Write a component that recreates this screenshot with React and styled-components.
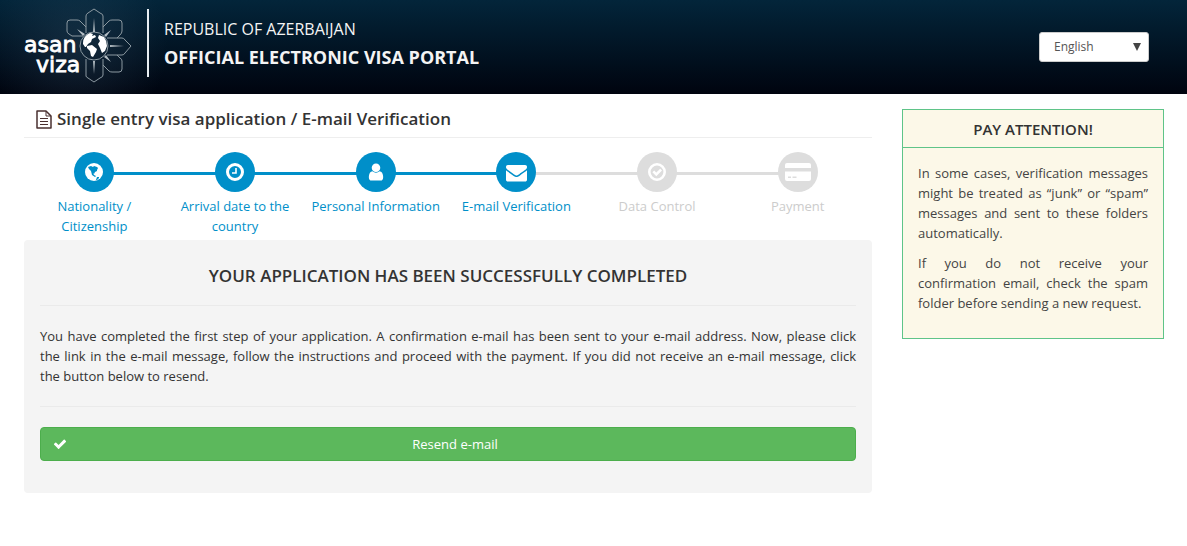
import { createGlobalStyle, styled } from "styled-components";

const GlobalStyle = createGlobalStyle`
  * {
    box-sizing: border-box;
  }
  body {
    margin: 0;
    background: #fff;
    color: #333;
    font-family: "Open Sans", "Noto Sans", sans-serif;
    font-size: 13px;
    line-height: 20px;
  }
  h1,
  h2,
  p,
  ol {
    margin: 0;
    padding: 0;
  }
`;

const Header = styled.header`
  display: flex;
  align-items: center;
  padding: 9px 38px 9px 24px;
  background:
    radial-gradient(circle at 78px 46px, rgba(60, 90, 115, 0.3), transparent 90px),
    linear-gradient(#03253a, #00040f);
`;

const LogoLink = styled.a`
  display: flex;
  margin-right: 14px;
`;

const PortalName = styled.div`
  flex: 1;
  align-self: flex-start;
  padding: 6px 0;
  padding-left: 15px;
  border-left: 2px solid #e8eef2;
  color: #f4f4f4;
  line-height: 28px;
`;

const PortalLine = styled.div`
  font-size: ${({ $strong }) => ($strong ? "18px" : "16px")};
  font-weight: ${({ $strong }) => ($strong ? 700 : 400)};
`;

const SelectBox = styled.div`
  position: relative;
  display: flex;

  svg {
    position: absolute;
    right: 8px;
    top: 11px;
    pointer-events: none;
  }
`;

const LanguageSelect = styled.select`
  appearance: none;
  width: 110px;
  height: 30px;
  padding: 0 14px;
  border: 1px solid #ccc;
  border-radius: 3px;
  background: #fff;
  color: #555;
  font: inherit;
  font-size: 12px;
`;

const Page = styled.div`
  display: flex;
  align-items: flex-start;
  gap: 30px;
  padding: 15px 23px 0 24px;
`;

const Main = styled.main`
  flex: 1;
  min-width: 0;
`;

const PageTitle = styled.h1`
  display: flex;
  align-items: center;
  gap: 5px;
  padding: 0 12px 8px;
  border-bottom: 1px solid #eee;
  font-size: 17px;
  font-weight: 600;
  line-height: 20px;
`;

const Steps = styled.ol`
  display: flex;
  padding: 14px 4px 4px 0;
  list-style: none;
`;

const Step = styled.li`
  position: relative;
  flex: 1;
  display: flex;
  flex-direction: column;
  align-items: center;
  gap: 4px;
  padding: 0 4px;
  color: ${({ $active }) => ($active ? "#008fc9" : "#ccc")};
  text-align: center;

  &:not(:first-child)::before {
    content: "";
    position: absolute;
    top: 20px;
    left: -50%;
    width: 100%;
    height: 3px;
    background: ${({ $active }) => ($active ? "#008fc9" : "#ddd")};
  }
`;

const StepCircle = styled.span`
  position: relative;
  z-index: 1;
  display: flex;
  align-items: center;
  justify-content: center;
  width: 40px;
  height: 40px;
  border-radius: 50%;
  background: ${({ $active }) => ($active ? "#008fc9" : "#ddd")};
  color: #fff;
`;

const Panel = styled.section`
  padding: 16px 16px 32px;
  border-radius: 4px;
  background: #f4f4f4;
`;

const PanelTitle = styled.h2`
  padding: 10px 0 19px;
  border-bottom: 1px solid #eaeaea;
  font-size: 17px;
  font-weight: 600;
  line-height: 20px;
  text-align: center;
`;

const PanelText = styled.p`
  padding: 20px 0;
  border-bottom: 1px solid #eaeaea;
  text-align: justify;
`;

const ResendButton = styled.button`
  display: flex;
  align-items: center;
  width: 100%;
  height: 34px;
  margin-top: 20px;
  padding: 0 12px;
  border: 1px solid #4cae4c;
  border-radius: 4px;
  background: #5cb85c;
  color: #fff;
  font: inherit;

  span {
    flex: 1;
  }
`;

const Notice = styled.aside`
  width: 262px;
  border: 1px solid #5fc488;
  background: #fcf8e8;
`;

const NoticeTitle = styled.h2`
  padding: 9px 0 8px;
  border-bottom: 1px solid #5fc488;
  font-size: 15px;
  font-weight: 600;
  line-height: 20px;
  text-align: center;
`;

const NoticeBody = styled.div`
  display: flex;
  flex-direction: column;
  gap: 10px;
  padding: 15px 15px 25px;
  color: #444;
  text-align: justify;
`;

function Logo() {
  return (
    <svg width="109" height="76" viewBox="24 9 109 76" overflow="visible" role="img" aria-label="asan viza">
      <g fill="none" stroke="#8c99a1">
        <path d="M86 33V16q0-2 2-3l6-4 6 4q3 1 3 3v17" />
        <path d="M86 59v17q0 1 2 2l6 4 6-4q3-1 3-3V59" />
        <path d="M107 38h15q2 0 3 2l6 6-6 7q-1 2-3 2h-15" />
        <path d="M103 27l6-6q1-1 3-1h7q3 0 3 3v8q0 2-2 4l-3 3" />
        <path d="M103 65l6 6q1 1 3 1h7q3 0 3-3v-8q0-2-2-3l-3-3" />
        <path d="M86 27l-6-6q-1-1-3-1h-7q-3 0-3 3v8q0 2 2 3l3 2h11" />
        <circle cx="94" cy="46" r="14" />
      </g>
      <path
        d="M94 18l1 14h-2zM94 74l1-13h-2zM124 46l-14-1v2zM111 30l-7 5 2 2zM111 62l-7-5 2-2zM77 29l6 7 2-2z"
        fill="#b4bdc3"
      />
      <path
        d="M83 43q0-7 7-10l3 1-1 2 3-1 1 2-4 2-1 3-3 2-2 3-1 0-2-3zM87 46l5-1 5 4-1 3-3 5-2-1-1-5-3-3zM99 35l5 2q3 4 3 9l-2 5-3 2-2-5-2-4 2-3-2-3z"
        fill="#fff"
      />
      <text fontFamily="DejaVu Sans, sans-serif" fontSize="22" fill="#fff" stroke="#fff" strokeWidth="0.8">
        <tspan x="24" y="52">
          asan
        </tspan>
        <tspan x="36" y="72">
          viza
        </tspan>
      </text>
    </svg>
  );
}

function GlobeIcon() {
  return (
    <svg width="18" height="18" viewBox="0 0 18 18" aria-hidden="true">
      <circle cx="9" cy="9" r="9" fill="currentColor" />
      <path
        d="M3 4l3-1 2 1 1-1 3 1 1 1-1 2 0 1-2 1-1 2-1-1 1 2 2 1-1 1-3-2-1-4-2-2zM12 14l2 0 0 1-2 2h-1z"
        fill="#008fc9"
      />
    </svg>
  );
}

function ClockIcon() {
  return (
    <svg width="20" height="20" viewBox="0 0 20 20" fill="none" stroke="currentColor" aria-hidden="true">
      <circle cx="10" cy="10" r="7.5" strokeWidth="3" />
      <path d="M11 6v5H7" strokeWidth="1.6" />
    </svg>
  );
}

function UserIcon() {
  return (
    <svg width="20" height="20" viewBox="0 0 1792 1792" fill="currentColor" aria-hidden="true">
      <path d="M1536 1399q0 109-62.5 187t-150.5 78h-854q-88 0-150.5-78t-62.5-187q0-85 8.5-160.5t31.5-152 58.5-131 94-89 134.5-34.5q131 128 313 128t313-128q76 0 134.5 34.5t94 89 58.5 131 31.5 152 8.5 160.5zm-256-887q0 159-112.5 271.5t-271.5 112.5-271.5-112.5-112.5-271.5 112.5-271.5 271.5-112.5 271.5 112.5 112.5 271.5z" />
    </svg>
  );
}

function EnvelopeIcon() {
  return (
    <svg width="21" height="21" viewBox="0 0 1792 1792" fill="currentColor" aria-hidden="true">
      <path d="M1792 710v794q0 66-47 113t-113 47h-1472q-66 0-113-47t-47-113v-794q44 49 101 87 362 246 497 345 57 42 92.5 65.5t94.5 48 110 24.5h2q51 0 110-24.5t94.5-48 92.5-65.5q170-123 498-345 57-39 100-87zm0-294q0 79-49 151t-122 123q-376 261-468 325-10 7-42.5 31t-54 38.5-52 32.5-57.5 27-50 9h-2q-23 0-50-9t-57.5-27-52-32.5-54-38.5-42.5-31q-91-64-262-182.5t-205-142.5q-62-42-117-115.5t-55-136.5q0-78 41.5-130t118.5-52h1472q65 0 112.5 47t47.5 113z" />
    </svg>
  );
}

function CheckCircleIcon() {
  return (
    <svg width="20" height="20" viewBox="0 0 20 20" fill="none" stroke="currentColor" aria-hidden="true">
      <circle cx="10" cy="10" r="7.7" strokeWidth="2.6" />
      <path d="M6.3 9.4l3 3 4.8-4.8" strokeWidth="2.6" />
    </svg>
  );
}

function CardIcon() {
  return (
    <svg width="28" height="20" viewBox="0 0 28 20" fill="currentColor" aria-hidden="true">
      <path
        d="M3 1h22q2 0 2 2v3H1V3q0-2 2-2zM1 9.5h26V17q0 2-2 2H3q-2 0-2-2zM4 14.5V16h3v-1.5zm4.5 0V16h4v-1.5z"
        fillRule="evenodd"
      />
    </svg>
  );
}

function CheckIcon() {
  return (
    <svg width="14" height="14" viewBox="0 0 1792 1792" fill="currentColor" aria-hidden="true">
      <path d="M1671 566q0 40-28 68l-724 724-136 136q-28 28-68 28t-68-28l-136-136-362-362q-28-28-28-68t28-68l136-136q28-28 68-28t68 28l294 295 656-657q28-28 68-28t68 28l136 136q28 28 28 68z" />
    </svg>
  );
}

function FileIcon() {
  return (
    <svg width="16" height="19" viewBox="0 0 16 19" fill="none" stroke="#4a3030" aria-hidden="true">
      <path d="M1 1h9l5 5v12H1z" strokeWidth="1.5" strokeLinejoin="round" />
      <path d="M10 1v5h5M4 8.5h8M4 11.5h8M4 14.5h8" />
    </svg>
  );
}

const STEPS = [
  { label: "Nationality / Citizenship", icon: GlobeIcon, active: true },
  { label: "Arrival date to the country", icon: ClockIcon, active: true },
  { label: "Personal Information", icon: UserIcon, active: true },
  { label: "E-mail Verification", icon: EnvelopeIcon, active: true },
  { label: "Data Control", icon: CheckCircleIcon, active: false },
  { label: "Payment", icon: CardIcon, active: false },
];

export default function App() {
  return (
    <>
      <GlobalStyle />
      <Header>
        <LogoLink href="#">
          <Logo />
        </LogoLink>
        <PortalName>
          <PortalLine>REPUBLIC OF AZERBAIJAN</PortalLine>
          <PortalLine $strong>OFFICIAL ELECTRONIC VISA PORTAL</PortalLine>
        </PortalName>
        <SelectBox>
          <LanguageSelect aria-label="Language" defaultValue="en">
            <option value="en">English</option>
          </LanguageSelect>
          <svg width="8" height="8" viewBox="0 0 8 8" aria-hidden="true">
            <path d="M0 0h8l-4 8z" fill="#444" />
          </svg>
        </SelectBox>
      </Header>
      <Page>
        <Main>
          <PageTitle>
            <FileIcon />
            Single entry visa application / E-mail Verification
          </PageTitle>
          <Steps>
            {STEPS.map(({ label, icon: Icon, active }) => (
              <Step key={label} $active={active}>
                <StepCircle $active={active}>
                  <Icon />
                </StepCircle>
                {label}
              </Step>
            ))}
          </Steps>
          <Panel>
            <PanelTitle>YOUR APPLICATION HAS BEEN SUCCESSFULLY COMPLETED</PanelTitle>
            <PanelText>
              You have completed the first step of your application. A confirmation e-mail has been
              sent to your e-mail address. Now, please click the link in the e-mail message, follow
              the instructions and proceed with the payment. If you did not receive an e-mail
              message, click the button below to resend.
            </PanelText>
            <ResendButton type="button">
              <CheckIcon />
              <span>Resend e-mail</span>
            </ResendButton>
          </Panel>
        </Main>
        <Notice>
          <NoticeTitle>PAY ATTENTION!</NoticeTitle>
          <NoticeBody>
            <p>
              In some cases, verification messages might be treated as “junk” or “spam” messages and
              sent to these folders automatically.
            </p>
            <p>
              If you do not receive your confirmation email, check the spam folder before sending a
              new request.
            </p>
          </NoticeBody>
        </Notice>
      </Page>
    </>
  );
}
